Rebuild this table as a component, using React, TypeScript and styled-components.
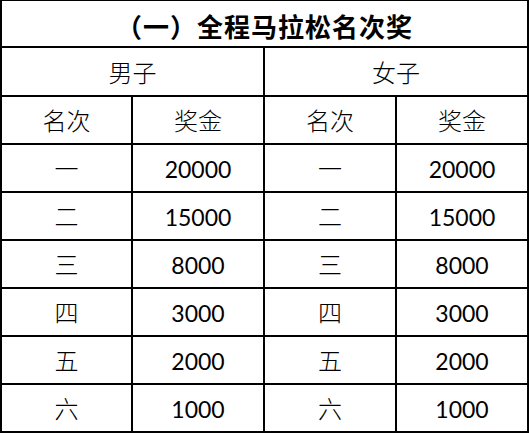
import React from 'react';
import styled, { createGlobalStyle } from 'styled-components';

const GlobalStyle = createGlobalStyle`
  html, body {
    margin: 0;
    padding: 0;
    background: #ffffff;
  }
`;

interface Prize {
  rank: string;
  amount: string;
}

const prizes: Prize[] = [
  { rank: '一', amount: '20000' },
  { rank: '二', amount: '15000' },
  { rank: '三', amount: '8000' },
  { rank: '四', amount: '3000' },
  { rank: '五', amount: '2000' },
  { rank: '六', amount: '1000' },
];

const Grid = styled.div`
  display: grid;
  grid-template-columns: 129px 130px 130px 130px;
  grid-template-rows: 45px 47px repeat(7, 46px);
  gap: 2px;
  width: 529px;
  box-sizing: border-box;
  padding: 1px 2px 2px 2px;
  background: #000000;
`;

const Cell = styled.div<{ $span?: number; $kind?: 'title' | 'cjk' | 'num' }>`
  grid-column: span ${(p) => p.$span || 1};
  background: #ffffff;
  display: flex;
  align-items: center;
  justify-content: center;
  color: #000000;
  font-family: ${(p) =>
    p.$kind === 'num'
      ? `Lato, 'Noto Sans CJK SC', sans-serif`
      : `'Noto Sans CJK SC', sans-serif`};
  font-size: ${(p) => (p.$kind === 'title' ? '26px' : p.$kind === 'num' ? '23px' : '24px')};
  font-weight: ${(p) => (p.$kind === 'title' ? 700 : p.$kind === 'num' ? 400 : 300)};
  letter-spacing: ${(p) => (p.$kind === 'title' ? '1px' : '0')};
  padding-top: ${(p) => (p.$kind === 'title' ? '4px' : p.$kind === 'num' ? '2px' : '0')};
  box-sizing: border-box;
  line-height: 1;
`;

export default function App() {
  return (
    <>
      <GlobalStyle />
      <Grid>
        <Cell $span={4} $kind="title">（一）全程马拉松名次奖</Cell>
        <Cell $span={2} $kind="cjk">男子</Cell>
        <Cell $span={2} $kind="cjk">女子</Cell>
        <Cell $kind="cjk">名次</Cell>
        <Cell $kind="cjk">奖金</Cell>
        <Cell $kind="cjk">名次</Cell>
        <Cell $kind="cjk">奖金</Cell>
        {prizes.map((p) => (
          <React.Fragment key={p.rank}>
            <Cell $kind="cjk">{p.rank}</Cell>
            <Cell $kind="num">{p.amount}</Cell>
            <Cell $kind="cjk">{p.rank}</Cell>
            <Cell $kind="num">{p.amount}</Cell>
          </React.Fragment>
        ))}
      </Grid>
    </>
  );
}
